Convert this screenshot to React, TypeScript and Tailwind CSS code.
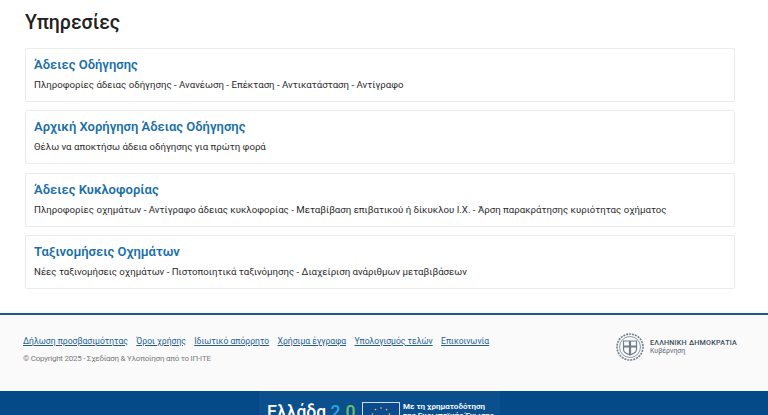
const services = [
  {
    title: 'Άδειες Οδήγησης',
    text: 'Πληροφορίες άδειας οδήγησης - Ανανέωση - Επέκταση - Αντικατάσταση - Αντίγραφο',
  },
  {
    title: 'Αρχική Χορήγηση Άδειας Οδήγησης',
    text: 'Θέλω να αποκτήσω άδεια οδήγησης για πρώτη φορά',
  },
  {
    title: 'Άδειες Κυκλοφορίας',
    text: 'Πληροφορίες οχημάτων - Αντίγραφο άδειας κυκλοφορίας - Μεταβίβαση επιβατικού ή δίκυκλου Ι.Χ. - Άρση παρακράτησης κυριότητας οχήματος',
  },
  {
    title: 'Ταξινομήσεις Οχημάτων',
    text: 'Νέες ταξινομήσεις οχημάτων - Πιστοποιητικά ταξινόμησης - Διαχείριση ανάριθμων μεταβιβάσεων',
  },
];

const links = [
  'Δήλωση προσβασιμότητας',
  'Όροι χρήσης',
  'Ιδιωτικό απόρρητο',
  'Χρήσιμα έγγραφα',
  'Υπολογισμός τελών',
  'Επικοινωνία',
];

function Emblem() {
  return (
    <svg width="28" height="28" viewBox="0 0 28 28" fill="none" stroke="#6f7f8c">
      <circle cx="14" cy="14" r="13" strokeWidth="1.6" strokeDasharray="2 1" />
      <circle cx="14" cy="14" r="10.5" strokeWidth="0.8" />
      <path d="M7.5 8h13v8.5c0 3-3.5 4.5-6.5 5.5-3-1-6.5-2.5-6.5-5.5z" strokeWidth="1.2" />
      <path d="M14 8v14M7.5 13.5h13" strokeWidth="2.2" />
    </svg>
  );
}

function EuFlag() {
  return (
    <div className="relative w-[38px] h-[30px] bg-[#0b4a8f] border border-white/80 shrink-0">
      <svg width="36" height="28" viewBox="0 0 36 28" fill="#f5d90a" className="absolute inset-0">
        <circle cx="18" cy="5" r="0.8" />
        <circle cx="23.5" cy="6.5" r="0.8" />
        <circle cx="26.5" cy="11" r="0.8" />
        <circle cx="12.5" cy="6.5" r="0.8" />
        <circle cx="9.5" cy="11" r="0.8" />
      </svg>
    </div>
  );
}

export default function App() {
  return (
    <div className="h-[415px] overflow-hidden bg-white font-['Roboto',sans-serif]">
      <main className="px-[25px] pt-[10px] pr-[33px]">
        <h1 className="text-[19.5px] leading-[25px] font-medium text-[#212121] mb-[13px]">Υπηρεσίες</h1>
        <div className="flex flex-col gap-[8.3px]">
          {services.map((s) => (
            <div key={s.title} className="h-[54px] border border-[#ebebeb] rounded-[2px] px-[8px] pt-[7px]">
              <h2 className="text-[13px] leading-[18px] font-semibold text-[#1a6fa8]">{s.title}</h2>
              <p className="mt-[4px] text-[9.66px] leading-[14px] text-[#2b2b2b]">{s.text}</p>
            </div>
          ))}
        </div>
      </main>

      <footer className="mt-[24px] h-[78px] border-t-[2.5px] border-[#1d5a8c] bg-[#fafafa] pl-[23px] pr-[31px] flex items-start justify-between">
        <div className="pt-[20px]">
          <div className="flex gap-[8.4px]">
            {links.map((l) => (
              <a key={l} className="text-[8.6px] leading-[12px] text-[#1f5f8e] underline whitespace-nowrap">{l}</a>
            ))}
          </div>
          <p className="mt-[7px] text-[8px] leading-[10px] tracking-[-0.25px] text-[#7a7a7a]">© Copyright 2025 - Σχεδίαση &amp; Υλοποίηση από το ΙΠ-ΙΤΕ</p>
        </div>
        <div className="flex items-center gap-[6px] pt-[18px]">
          <Emblem />
          <div>
            <div className="text-[7.2px] leading-[9px] font-medium tracking-[0.2px] text-[#3b4a58]">ΕΛΛΗΝΙΚΗ ΔΗΜΟΚΡΑΤΙΑ</div>
            <div className="text-[7px] leading-[9px] text-[#5a6773]">Κυβέρνηση</div>
          </div>
        </div>
      </footer>

      <div className="h-[25px] bg-[#044a89] flex justify-center">
        <div className="w-[241px] ml-[-9px] h-full bg-[#0b4f8d] flex items-start pl-[8px] pt-[12px] overflow-hidden">
          <div className="w-[95px] shrink-0 text-[17.6px] leading-[18px] font-medium text-white whitespace-nowrap">
            Ελλάδα <span className="text-[#2ba6de]">2</span><span className="text-[#2ba6de]">.</span><span className="text-[#6cbf6a]">0</span>
          </div>
          <div className="mt-[-1px]">
            <EuFlag />
          </div>
          <div className="ml-[3px] mt-[-1px] text-[8px] leading-[9.5px] font-semibold text-white whitespace-nowrap">
            Με τη χρηματοδότηση
            <br />
            της Ευρωπαϊκής Ένωσης
          </div>
        </div>
      </div>
    </div>
  );
}
